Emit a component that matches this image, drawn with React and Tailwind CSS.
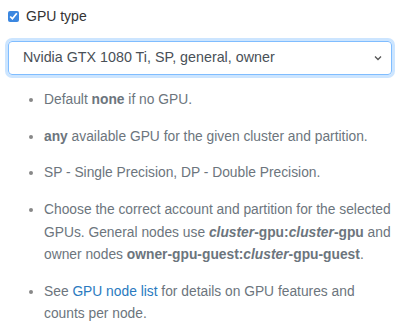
const items = [
  <>Default <b>none</b> if no GPU.</>,
  <><b>any</b> available GPU for the given cluster and partition.</>,
  <>SP - Single Precision, DP - Double Precision.</>,
  <>
    Choose the correct account and partition for the selected GPUs. General nodes use{' '}
    <b><i>cluster</i>-gpu:<i>cluster</i>-gpu</b> and owner nodes{' '}
    <b>owner-gpu-guest:<i>cluster</i>-gpu-guest</b>.
  </>,
  <>
    See <a href="#" className="text-[#2a7ac0]">GPU node list</a> for details on GPU features and counts per node.
  </>,
];

export default function App() {
  return (
    <div className="w-[407px] h-[336px] bg-white overflow-hidden font-['Liberation_Sans',Arial,sans-serif]">
      <div className="pt-[6px] pl-[8px]">
        <label className="flex items-center text-[14px] text-[#333] h-[20px]">
          <input type="checkbox" defaultChecked className="w-[11px] h-[11px] m-0 accent-[#3b87e0]" />
          <span className="ml-[7px]">GPU type</span>
        </label>
        <div className="mt-[15px] mr-[15px]">
          <div className="flex items-center justify-between h-[34px] border border-[#80bdff] rounded-[4px] shadow-[0_0_0_3px_rgba(0,123,255,0.2)] pl-[14px] pr-[8px] text-[14.3px] text-[#495057]">
            <span>Nvidia GTX 1080 Ti, SP, general, owner</span>
            <svg width="10" height="10" viewBox="0 0 10 10" fill="none" stroke="#555" strokeWidth="1.3">
              <path d="M2 3.5 L5 6.5 L8 3.5" />
            </svg>
          </div>
        </div>
        <ul className="mt-[14px] pl-[36px] pr-[12px] list-disc marker:text-[#888] text-[13.8px] leading-[22.4px] text-[#6c757d] flex flex-col gap-[14.3px]">
          {items.map((it, i) => (
            <li key={i}>{it}</li>
          ))}
        </ul>
      </div>
    </div>
  );
}
